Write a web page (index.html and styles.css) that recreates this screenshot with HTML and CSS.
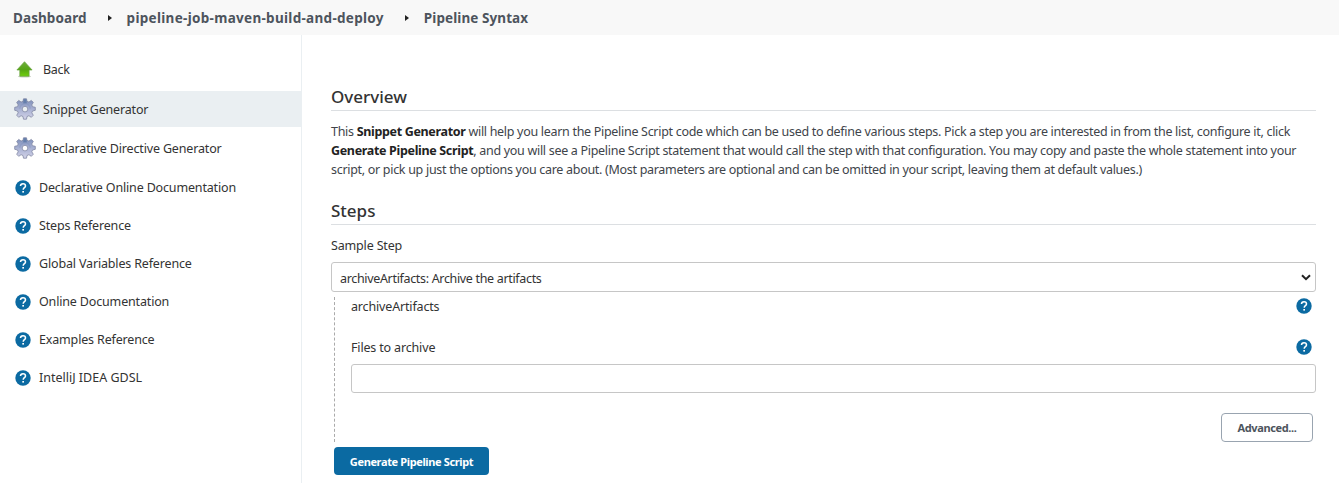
FILE: index.html
```html
<!DOCTYPE html>
<html lang="en">
<head>
<meta charset="utf-8">
<title>Pipeline Syntax</title>
<link rel="stylesheet" href="styles.css">
</head>
<body>
<svg class="defs" width="0" height="0">
  <defs>
    <linearGradient id="gearFill" x1="0" y1="0" x2="0" y2="1"><stop offset="0" stop-color="#7b8db8"/><stop offset=".45" stop-color="#a3add0"/><stop offset="1" stop-color="#d3d3e8"/></linearGradient>
    <linearGradient id="upFill" x1="0" y1="0" x2="0" y2="1"><stop offset="0" stop-color="#6fae3c"/><stop offset=".55" stop-color="#55a514"/><stop offset="1" stop-color="#6fd00c"/></linearGradient>
    <symbol id="help" viewBox="0 0 16 16"><circle cx="8" cy="8" r="7.7" fill="#0b6aa2"/><path d="M5.500 6.100C5.500 4.500 6.500 3.700 8 3.700s2.500.9 2.500 2.200c0 1.700-2.300 1.900-2.300 3.800" fill="none" stroke="#fff" stroke-width="1.500"/><rect x="7.300" y="11" width="1.700" height="1.600" fill="#fff"/></symbol>
    <symbol id="gear" viewBox="0 0 22 22"><path fill="url(#gearFill)" stroke="#8188a3" stroke-width=".8" stroke-linejoin="round" fill-rule="evenodd" d="M9.500 .8h3l.5 2.500 1.900.7 2.400-1.600 2 2-1.500 2.500.7 1.800 2.800.6v3l-2.800.7-.7 1.800 1.500 2.400-2 2.100-2.400-1.600-1.900.8-.5 2.700h-3l-.5-2.700-1.900-.8-2.400 1.600-2-2.100 1.500-2.400-.7-1.800L.7 12.300v-3l2.800-.6.7-1.800-1.500-2.500 2-2L7.100 4 9 3.300zM11 8.300a2.800 2.800 0 1 0 0 5.600 2.800 2.800 0 0 0 0-5.600z"/><path d="M9.700 1.200h2.600l.5 4.300H9.200z" fill="#657fab"/><path d="M5.800 10.800a5.200 5.200 0 0 1 10.400 0" fill="none" stroke="#8293bd" stroke-width="1.200" opacity=".5"/></symbol>
    <symbol id="up" viewBox="0 0 16 17"><ellipse cx="8" cy="15.500" rx="6.500" ry="1" fill="#c9cfc4"/><path d="M8 .7 15.600 9h-3v6.200H3.300V9H.4z" fill="url(#upFill)" stroke="#68a441" stroke-width=".7" stroke-linejoin="round"/></symbol>
  </defs>
</svg>
<nav class="crumbs">
  <span class="crumb">Dashboard</span><i class="sep"></i><span class="crumb crumb-job">pipeline-job-maven-build-and-deploy</span><i class="sep"></i><span class="crumb">Pipeline Syntax</span>
</nav>
<div class="page">
  <aside class="side">
    <a class="task task-back"><svg class="ic-up"><use href="#up"/></svg><span>Back</span></a>
    <a class="task active"><svg class="ic-gear"><use href="#gear"/></svg><span>Snippet Generator</span></a>
    <a class="task task-directive"><svg class="ic-gear"><use href="#gear"/></svg><span>Declarative Directive Generator</span></a>
    <a class="task"><svg class="ic-help"><use href="#help"/></svg><span>Declarative Online Documentation</span></a>
    <a class="task"><svg class="ic-help"><use href="#help"/></svg><span>Steps Reference</span></a>
    <a class="task"><svg class="ic-help"><use href="#help"/></svg><span>Global Variables Reference</span></a>
    <a class="task"><svg class="ic-help"><use href="#help"/></svg><span>Online Documentation</span></a>
    <a class="task"><svg class="ic-help"><use href="#help"/></svg><span>Examples Reference</span></a>
    <a class="task task-idea"><svg class="ic-help"><use href="#help"/></svg><span>IntelliJ IDEA GDSL</span></a>
  </aside>
  <main class="main">
    <h2 class="head">Overview</h2>
    <p class="intro">This <b>Snippet Generator</b> will help you learn the Pipeline Script code which can be used to define various steps. Pick a step you are interested in from the list, configure it, click<br><b>Generate Pipeline Script</b>, and you will see a Pipeline Script statement that would call the step with that configuration. You may copy and paste the whole statement into your<br>script, or pick up just the options you care about. (Most parameters are optional and can be omitted in your script, leaving them at default values.)</p>
    <h2 class="head">Steps</h2>
    <div class="label sample">Sample Step</div>
    <div class="select"><span>archiveArtifacts: Archive the artifacts</span><svg class="chev" viewBox="0 0 10 7"><path d="M1 1.200 5 5.200 9 1.200" fill="none" stroke="#222" stroke-width="2"/></svg></div>
    <section class="step">
      <div class="row"><span class="label">archiveArtifacts</span><svg class="ic-help"><use href="#help"/></svg></div>
      <div class="row row-files"><span class="label">Files to archive</span><svg class="ic-help"><use href="#help"/></svg></div>
      <input class="field" type="text">
      <button class="btn advanced">Advanced...</button>
    </section>
    <button class="btn primary">Generate Pipeline Script</button>
  </main>
</div>
</body>
</html>
```
FILE: styles.css
```css
* { box-sizing: border-box; }
body { margin: 0; height: 483px; overflow: hidden; background: #fff; color: #333; font-family: "Noto Sans", "Open Sans", sans-serif; font-size: 12.5px; white-space: nowrap; }
.defs { display: block; }
svg { flex: none; }
.crumbs { display: flex; align-items: center; height: 35px; padding: 0 0 0 13px; background: #f8f8f8; color: #4d545d; font-size: 13.5px; font-weight: 700; }
.crumb { line-height: 20px; padding-top: 1px; letter-spacing: .08px; }
.crumb-job { letter-spacing: .3px; }
.sep { width: 0; height: 0; margin: 0 15px 0 21px; border: 3px solid transparent; border-left: 4px solid #222; border-right: 0; }
.page { display: flex; height: 448px; }
.side { width: 302px; border-right: 1px solid #eaeff2; padding-top: 16px; display: flex; flex-direction: column; gap: 2px; }
.task { display: flex; align-items: center; height: 36px; padding-left: 14px; gap: 7px; letter-spacing: -.16px; }
.task-back { height: 36px; margin-bottom: 2px; padding-left: 16px; gap: 10px; letter-spacing: -.3px; }
.task-directive { margin: 1px 0; }
.task-idea { letter-spacing: 0; }
.active { background: #eaeff2; }
.ic-up { width: 17px; height: 17px; }
.ic-gear { width: 22px; height: 22px; }
.ic-help { width: 16px; height: 16px; }
.task .ic-help { margin: 1px 1px 0 1px; }
.main { flex: 1; padding: 48px 23px 0 29px; }
.head { margin: 0; height: 28px; line-height: 28px; font-size: 17px; font-weight: 500; border-bottom: 1px solid #dcdfe2; }
.intro { margin: 11px 0 18px; font-size: 12.5px; line-height: 19px; letter-spacing: -.3px; color: #40444a; }
.intro b { color: #222; letter-spacing: -.33px; }
.label { font-size: 12.5px; line-height: 18px; letter-spacing: -.16px; }
.sample { margin: 12px 0 7px; }
.select { display: flex; align-items: center; justify-content: space-between; height: 30px; padding: 0 4px 0 8px; border: 1px solid #c6c6c6; border-radius: 3px; letter-spacing: -.33px; }
.select span { padding-top: 2px; }
.chev { width: 10px; height: 7px; }
.step { display: flex; flex-direction: column; margin: 5px 0 0 3px; height: 145px; padding-left: 16px; border-left: 1px dashed #aaa; }
.row { display: flex; align-items: center; justify-content: space-between; height: 18px; padding-right: 4px; }
.row .label { padding-top: 2px; }
.row-files { margin: 23px 0 8px; }
.field { width: 100%; height: 29px; border: 1px solid #c6c6c6; border-radius: 3px; background: #fff; }
.btn { font-family: inherit; font-size: 11px; font-weight: 700; letter-spacing: -.37px; border-radius: 4px; padding: 0; white-space: nowrap; }
.advanced { align-self: flex-end; width: 92px; height: 29px; margin: 20px 3px 0 0; border: 1px solid #99a4b0; background: #fff; color: #4d545d; }
.primary { display: block; width: 155px; height: 28px; margin: 5px 0 0 3px; border: 0; background: #0b6aa2; color: #fff; }
```
